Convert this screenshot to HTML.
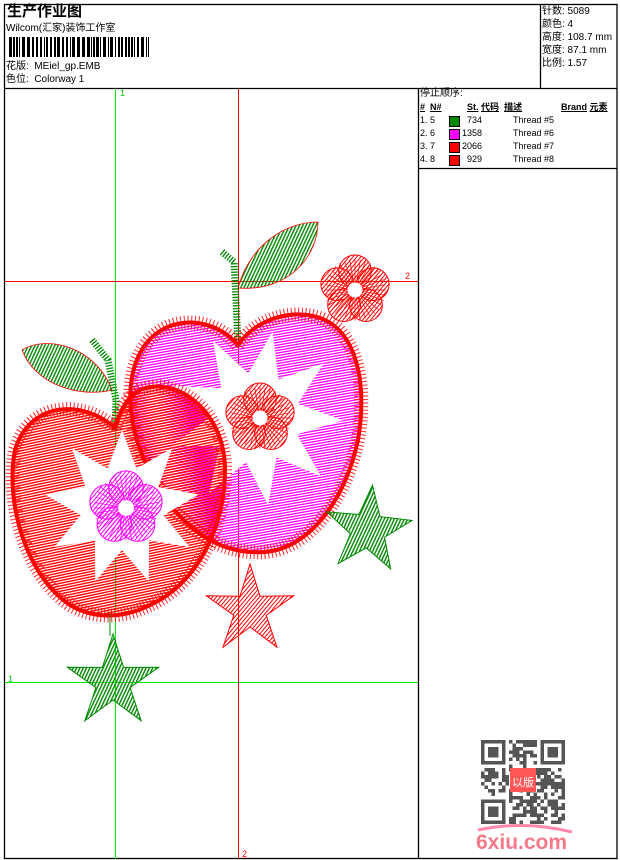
<!DOCTYPE html>
<html><head><meta charset="utf-8"><style>
html,body{margin:0;padding:0;background:#fff}
body{width:620px;height:860px;position:relative;overflow:hidden;font-family:"Liberation Sans","Noto Sans CJK SC",sans-serif;color:#000}
.t{position:absolute;font-size:10px;white-space:nowrap;line-height:12px}
svg{position:absolute;left:0;top:0}
</style></head><body>
<svg id="s" width="620" height="860" viewBox="0 0 620 860">
<defs>
<pattern id="hr" width="6" height="2.6" patternUnits="userSpaceOnUse" patternTransform="rotate(-12)"><rect width="6" height="1.4" fill="#f00"/></pattern>
<pattern id="hp" width="6" height="2.6" patternUnits="userSpaceOnUse" patternTransform="rotate(-10)"><rect width="6" height="1.3" fill="#f0f"/></pattern>
<pattern id="hg" width="3" height="6" patternUnits="userSpaceOnUse" patternTransform="rotate(25)"><rect width="1.4" height="6" fill="#080"/></pattern>
<pattern id="fr" width="3" height="3" patternUnits="userSpaceOnUse" patternTransform="rotate(40)"><rect width="1" height="3" fill="#f00"/></pattern>
<pattern id="fp" width="3" height="3" patternUnits="userSpaceOnUse" patternTransform="rotate(40)"><rect width="1" height="3" fill="#f0f"/></pattern>
</defs>
<g stroke="#000" stroke-width="1.3" fill="none">
<rect x="4.5" y="4.5" width="612.5" height="854"/>
<line x1="4" y1="88.5" x2="617" y2="88.5"/>
<line x1="540.5" y1="4" x2="540.5" y2="88"/>
<line x1="418.5" y1="88" x2="418.5" y2="859"/>
<line x1="418" y1="168.5" x2="617" y2="168.5"/>
</g>
<g id="bc" fill="#000"></g>
<line x1="115.5" y1="89" x2="115.5" y2="859" stroke="#0e0" stroke-width="1"/>
<line x1="5" y1="682.5" x2="418" y2="682.5" stroke="#0e0" stroke-width="1"/>
<line x1="238.5" y1="89" x2="238.5" y2="859" stroke="#f00" stroke-width="1"/>
<line x1="5" y1="281.5" x2="418" y2="281.5" stroke="#f00" stroke-width="1"/>
<text x="120" y="96" font-size="9" fill="#0c0" font-family="Liberation Sans">1</text>
<text x="8" y="682" font-size="9" fill="#0c0" font-family="Liberation Sans">1</text>
<text x="405" y="279" font-size="9" fill="#f00" font-family="Liberation Sans">2</text>
<text x="242" y="857" font-size="9" fill="#f00" font-family="Liberation Sans">2</text>
<path d="M22 350 C45 335 95 345 112 390 C80 398 35 385 22 350Z" fill="url(#hg)" stroke="#f00" stroke-width="0.8"/>
<path d="M238 288 C250 245 285 222 318 222 C318 255 290 292 238 288Z" fill="url(#hg)" stroke="#f00" stroke-width="0.8"/>
<path d="M222 252 L234 262 L236 300 L238 345" stroke="#080" stroke-width="7" stroke-dasharray="1.3 1.5" fill="none"/>
<path d="M92 340 L108 360 L116 400 L115 430" stroke="#080" stroke-width="7" stroke-dasharray="1.3 1.5" fill="none"/>
<path d="M238 345 C215 318 170 312 145 345 C120 380 128 440 160 490 C185 530 220 555 265 552 C310 548 345 500 358 440 C368 380 355 330 320 318 C290 308 255 320 238 345Z" fill="url(#hp)" stroke="#f00" stroke-width="4"/>
<path d="M238 345 C215 318 170 312 145 345 C120 380 128 440 160 490 C185 530 220 555 265 552 C310 548 345 500 358 440 C368 380 355 330 320 318 C290 308 255 320 238 345Z" fill="none" stroke="#f00" stroke-width="14" stroke-dasharray="1 2.5" opacity=".85"/>
<polygon id="st1" fill="#fff"/>
<path d="M115 428 C85 400 30 400 15 450 C5 500 25 575 70 605 C95 620 125 618 150 605 C195 585 225 530 225 470 C225 410 175 375 140 390 C128 396 120 410 115 428Z" fill="url(#hr)" stroke="#f00" stroke-width="4"/>
<path d="M115 428 C85 400 30 400 15 450 C5 500 25 575 70 605 C95 620 125 618 150 605 C195 585 225 530 225 470 C225 410 175 375 140 390 C128 396 120 410 115 428Z" fill="none" stroke="#f00" stroke-width="14" stroke-dasharray="1 2.5" opacity=".85"/>
<polygon id="st2" fill="#fff"/>
<g id="fl"></g>
<polygon id="gs1" fill="url(#hg)" stroke="#080" stroke-width="1"/>
<polygon id="gs2" fill="url(#hg)" stroke="#080" stroke-width="1"/>
<polygon id="rs1" fill="url(#fr)" stroke="#f00" stroke-width="1"/>
<line x1="110" y1="614" x2="110" y2="636" stroke="#080"/>
<g id="qr" fill="#555"></g>
<rect x="510" y="768" width="26" height="24" fill="#f55"/>
<text x="523" y="786" font-size="11" fill="#fff" text-anchor="middle" font-family="Liberation Sans,Noto Sans CJK SC,sans-serif">以版</text>
<path d="M478 830 Q525 820 572 832" stroke="#f8a" stroke-width="3" fill="none"/>
<text x="476" y="849" font-size="21" font-weight="bold" fill="#f47a8a" font-family="Liberation Sans,sans-serif">6xiu.com</text>
</svg>
<div class="t" style="left:7px;top:3px;font-size:15px;font-weight:bold;line-height:17px">生产作业图</div>
<div class="t" style="left:6px;top:23px">Wilcom(汇家)装饰工作室</div>
<div class="t" style="left:6px;top:61px">花版:&nbsp; MEiel_gp.EMB</div>
<div class="t" style="left:6px;top:74px">色位:&nbsp; Colorway 1</div>
<div class="t" style="left:542px;top:5px;line-height:13px">针数: 5089<br>颜色: 4<br>高度: 108.7 mm<br>宽度: 87.1 mm<br>比例: 1.57</div>
<div class="t" style="left:420px;top:88px">停止顺序:</div>
<div class="t" style="left:420px;top:101px;font-weight:bold;font-size:9px"><u>#</u>&nbsp; <u>N#</u></div>
<div class="t" style="left:467px;top:101px;font-weight:bold;font-size:9px"><u>St.</u> <u>代码</u> &nbsp;<u>描述</u></div>
<div class="t" style="left:561px;top:101px;font-weight:bold;font-size:9px"><u>Brand</u> <u>元素</u></div>
<div class="t" style="left:420px;top:114px;line-height:13px;font-size:9px">1. 5<br>2. 6<br>3. 7<br>4. 8</div>
<div style="position:absolute;left:449px;top:116px;width:9px;height:9px;background:#080;border:1px solid #000"></div>
<div style="position:absolute;left:449px;top:129px;width:9px;height:9px;background:#f0f;border:1px solid #000"></div>
<div style="position:absolute;left:449px;top:142px;width:9px;height:9px;background:#f00;border:1px solid #000"></div>
<div style="position:absolute;left:449px;top:155px;width:9px;height:9px;background:#f00;border:1px solid #000"></div>
<div class="t" style="left:460px;top:114px;width:22px;text-align:right;line-height:13px;font-size:9px">734<br>1358<br>2066<br>929</div>
<div class="t" style="left:513px;top:114px;line-height:13px;font-size:9px">Thread #5<br>Thread #6<br>Thread #7<br>Thread #8</div>
<script>
var NS="http://www.w3.org/2000/svg";
function el(p,t,a){var e=document.createElementNS(NS,t);for(var k in a)e.setAttribute(k,a[k]);p.appendChild(e);return e;}
function rnd(a,b){var v=Math.sin(a*12.9898+b*78.233)*43758.5453;return v-Math.floor(v);}
function star(id,cx,cy,ro,ri,n,rot){var p=[];for(var i=0;i<2*n;i++){var r=i%2?ri:ro,a=rot+Math.PI*i/n;p.push((cx+r*Math.sin(a)).toFixed(1)+","+(cy-r*Math.cos(a)).toFixed(1));}document.getElementById(id).setAttribute("points",p.join(" "));}
star("st1",255,418,88,45,9,0.2);
star("st2",122,508,78,42,9,0);
star("gs1",368,530,45,18,5,0.1);
star("gs2",113,682,48,18,5,0);
star("rs1",250,610,46,17,5,0);
var fl=document.getElementById("fl");
function flower(cx,cy,r,pat,col){var g=el(fl,"g",{});for(var i=0;i<5;i++){var a=i*2*Math.PI/5-Math.PI/2;el(g,"circle",{cx:cx+r*0.55*Math.cos(a),cy:cy+r*0.55*Math.sin(a),r:r*0.48,fill:"url(#"+pat+")",stroke:col,"stroke-width":1});}for(var k=0;k<36;k++){var b=k*Math.PI/18;el(g,"line",{x1:cx+r*0.22*Math.cos(b),y1:cy+r*0.22*Math.sin(b),x2:cx+r*0.9*Math.cos(b),y2:cy+r*0.9*Math.sin(b),stroke:col,"stroke-width":0.7});}el(g,"circle",{cx:cx,cy:cy,r:r*0.22,fill:"#fff"});}
flower(355,290,34,"fr","#f00");
flower(260,418,34,"fr","#f00");
flower(126,508,36,"fp","#f0f");
var bc=document.getElementById("bc"),x=9,n=0;
while(x<150){n++;var w=1+Math.floor(rnd(n,1)*3),g=1+Math.floor(rnd(n,2)*2);if(x+w>150)break;el(bc,"rect",{x:x,y:37,width:w,height:20});x+=w+g;}
var qr=document.getElementById("qr"),q=3.5,ox=481,oy=740;
for(var i=0;i<24;i++)for(var j=0;j<24;j++){var f=(i<8&&j<8)||(i<8&&j>15)||(i>15&&j<8);if(f)continue;if(rnd(i+3,j+7)>0.48)el(qr,"rect",{x:ox+i*q,y:oy+j*q,width:q,height:q});}
[[0,0],[17,0],[0,17]].forEach(function(c){var X=ox+c[0]*q,Y=oy+c[1]*q;el(qr,"rect",{x:X,y:Y,width:7*q,height:7*q});el(qr,"rect",{x:X+q,y:Y+q,width:5*q,height:5*q,fill:"#fff"});el(qr,"rect",{x:X+2*q,y:Y+2*q,width:3*q,height:3*q});});
</script>
</body></html>
